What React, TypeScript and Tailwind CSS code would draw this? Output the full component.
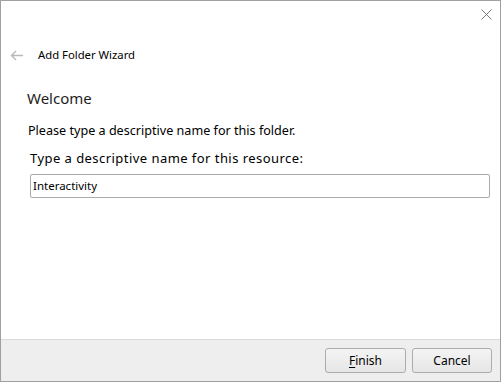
export default function App() {
  return (
    <div className="w-[502px] h-[383px] bg-white">
      <div className="w-[501px] h-[382px] border border-[#a0a0a0] bg-white flex flex-col font-['Noto_Sans',sans-serif] text-black">
        <div className="h-[36px] flex justify-end items-start pt-[8px] pr-[8px]">
          <svg width="11" height="11" viewBox="0 0 11 11">
            <path d="M0.5 0.5 L10.5 10.5 M10.5 0.5 L0.5 10.5" stroke="#7a7a7a" strokeWidth="1" fill="none" />
          </svg>
        </div>

        <div className="h-[36px] flex items-center pl-[9px]">
          <svg width="13" height="11" viewBox="0 0 13 11">
            <path d="M13 5.5 H1.5 M6 1 L1.5 5.5 L6 10" stroke="#b9b9b9" strokeWidth="1.4" fill="none" />
          </svg>
          <span className="ml-[15px] text-[11.3px] leading-[16px]">Add Folder Wizard</span>
        </div>

        <div className="flex-1 flex flex-col pl-[26px] pr-[10px]">
          <div className="mt-[14px] text-[15px] leading-[22px] text-[#1e1e1e]">Welcome</div>
          <div className="mt-[14px] ml-[1px] text-[12.6px] leading-[16px]">
            Please type a descriptive name for this folder.
          </div>
          <div className="mt-[10px] ml-[3px] text-[13px] tracking-[0.45px] leading-[18px]">
            Type a descriptive name for this resource:
          </div>
          <div className="mt-[7px] ml-[3px] h-[24px] w-[460px] border border-[#ababab] rounded-[2px] flex items-center pl-[2px] text-[11.5px]">
            Interactivity
          </div>
        </div>

        <div className="h-[42px] bg-[#eeeeee] border-t border-[#dadada] flex justify-end items-center gap-[6px] pr-[8px]">
          <button className="w-[81px] h-[25px] rounded-[3px] border border-[#acacac] bg-gradient-to-b from-[#f4f4f4] to-[#e6e6e6] text-[12px] text-black">
            <span className="underline underline-offset-2">F</span>inish
          </button>
          <button className="w-[80px] h-[25px] rounded-[3px] border border-[#acacac] bg-gradient-to-b from-[#f4f4f4] to-[#e6e6e6] text-[12px] text-black">
            Cancel
          </button>
        </div>
      </div>
    </div>
  );
}
